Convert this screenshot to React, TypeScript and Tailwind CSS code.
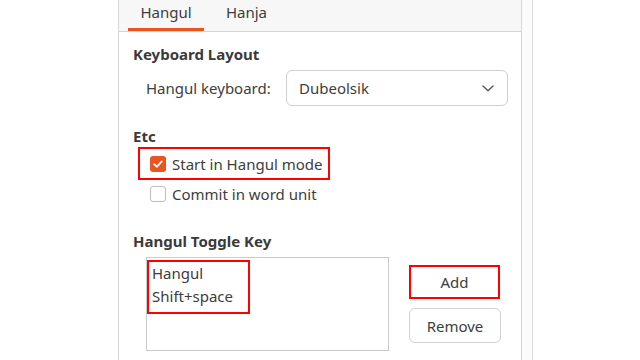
import React from 'react';

const font = { fontFamily: '"Noto Sans", "Open Sans", sans-serif' };

const Check = ({ checked }: { checked: boolean }) =>
  checked ? (
    <span className="flex h-[16px] w-[16px] shrink-0 items-center justify-center rounded-[3px] bg-[#e95420]">
      <svg width="12" height="12" viewBox="0 0 12 12" fill="none">
        <path d="M2.2 6.2 L4.8 8.8 L9.8 3.4" stroke="white" strokeWidth="1.8" strokeLinecap="round" strokeLinejoin="round" />
      </svg>
    </span>
  ) : (
    <span className="h-[16px] w-[16px] shrink-0 rounded-[3px] border border-[#bdbdbd] bg-white" />
  );

export default function App() {
  return (
    <div className="flex h-[360px] w-[640px] overflow-hidden bg-white text-[15px] text-[#3d3d3d]" style={font}>
      <div className="w-[118px] shrink-0" />
      <div className="flex w-[404px] shrink-0 flex-col border-x border-[#d6d6d6] bg-white">
        {/* tabs */}
        <div className="flex h-[32px] shrink-0 border-b border-[#d4d4d4] bg-[#f7f7f7]">
          <div className="ml-[9px] flex w-[76px] flex-col">
            <div className="flex h-[28px] items-center justify-center pb-[4px] leading-[20px]">Hangul</div>
            <div className="h-[3px] bg-[#e95420]" />
          </div>
          <div className="ml-[8px] flex h-[28px] w-[69px] items-center justify-center pb-[4px] leading-[20px]">Hanja</div>
        </div>

        <div className="flex flex-col pl-[14px]">
          <div className="mt-[12px] h-[20px] font-bold leading-[20px] text-[#3a3a3a]">Keyboard Layout</div>

          <div className="mt-[6px] flex h-[36px] items-center">
            <div className="ml-[13px] w-[140px] leading-[20px]">Hangul keyboard:</div>
            <div className="flex h-[36px] w-[222px] items-center justify-between rounded-[6px] border border-[#cfcfcf] bg-white pl-[12px] pr-[13px]">
              <span className="leading-[20px]">Dubeolsik</span>
              <svg width="12" height="7" viewBox="0 0 12 7" fill="none">
                <path d="M1 1 L6 5.8 L11 1" stroke="#555" strokeWidth="1.3" strokeLinecap="round" strokeLinejoin="round" />
              </svg>
            </div>
          </div>

          <div className="mt-[20px] h-[20px] font-bold leading-[20px] text-[#3a3a3a]">Etc</div>

          <div className="mt-[1px] ml-[5px] flex h-[33px] w-[192px] items-center gap-[6px] border-2 border-[#ff0000] pl-[10px]">
            <Check checked />
            <span className="leading-[20px]">Start in Hangul mode</span>
          </div>
          <div className="ml-[17px] flex h-[28px] items-center gap-[6px]">
            <Check checked={false} />
            <span className="leading-[20px]">Commit in word unit</span>
          </div>

          <div className="mt-[23px] h-[20px] font-bold leading-[20px] text-[#3a3a3a]">Hangul Toggle Key</div>

          <div className="mt-[6px] ml-[13px] flex">
            <div className="h-[94px] w-[243px] border border-[#cbcbcb] bg-white pt-[2px]">
              <div className="flex w-[103px] flex-col border-2 border-[#ff0000] pl-[3px] pb-[3px]">
                <div className="h-[22px] leading-[22px]">Hangul</div>
                <div className="h-[25px] leading-[25px]">Shift+space</div>
              </div>
            </div>
            <div className="ml-[20px] mt-[8px] flex flex-col">
              <div className="flex h-[34px] w-[91px] items-center justify-center border-2 border-[#ff0000] bg-white leading-[20px]">Add</div>
              <div className="mt-[9px] flex h-[35px] w-[92px] items-center justify-center rounded-[6px] border border-[#d2d2d2] bg-white leading-[20px]">Remove</div>
            </div>
          </div>
        </div>
      </div>
      <div className="w-[10px] shrink-0 bg-[#fbfbfb]" />
      <div className="w-px shrink-0 bg-[#dadada]" />
    </div>
  );
}
